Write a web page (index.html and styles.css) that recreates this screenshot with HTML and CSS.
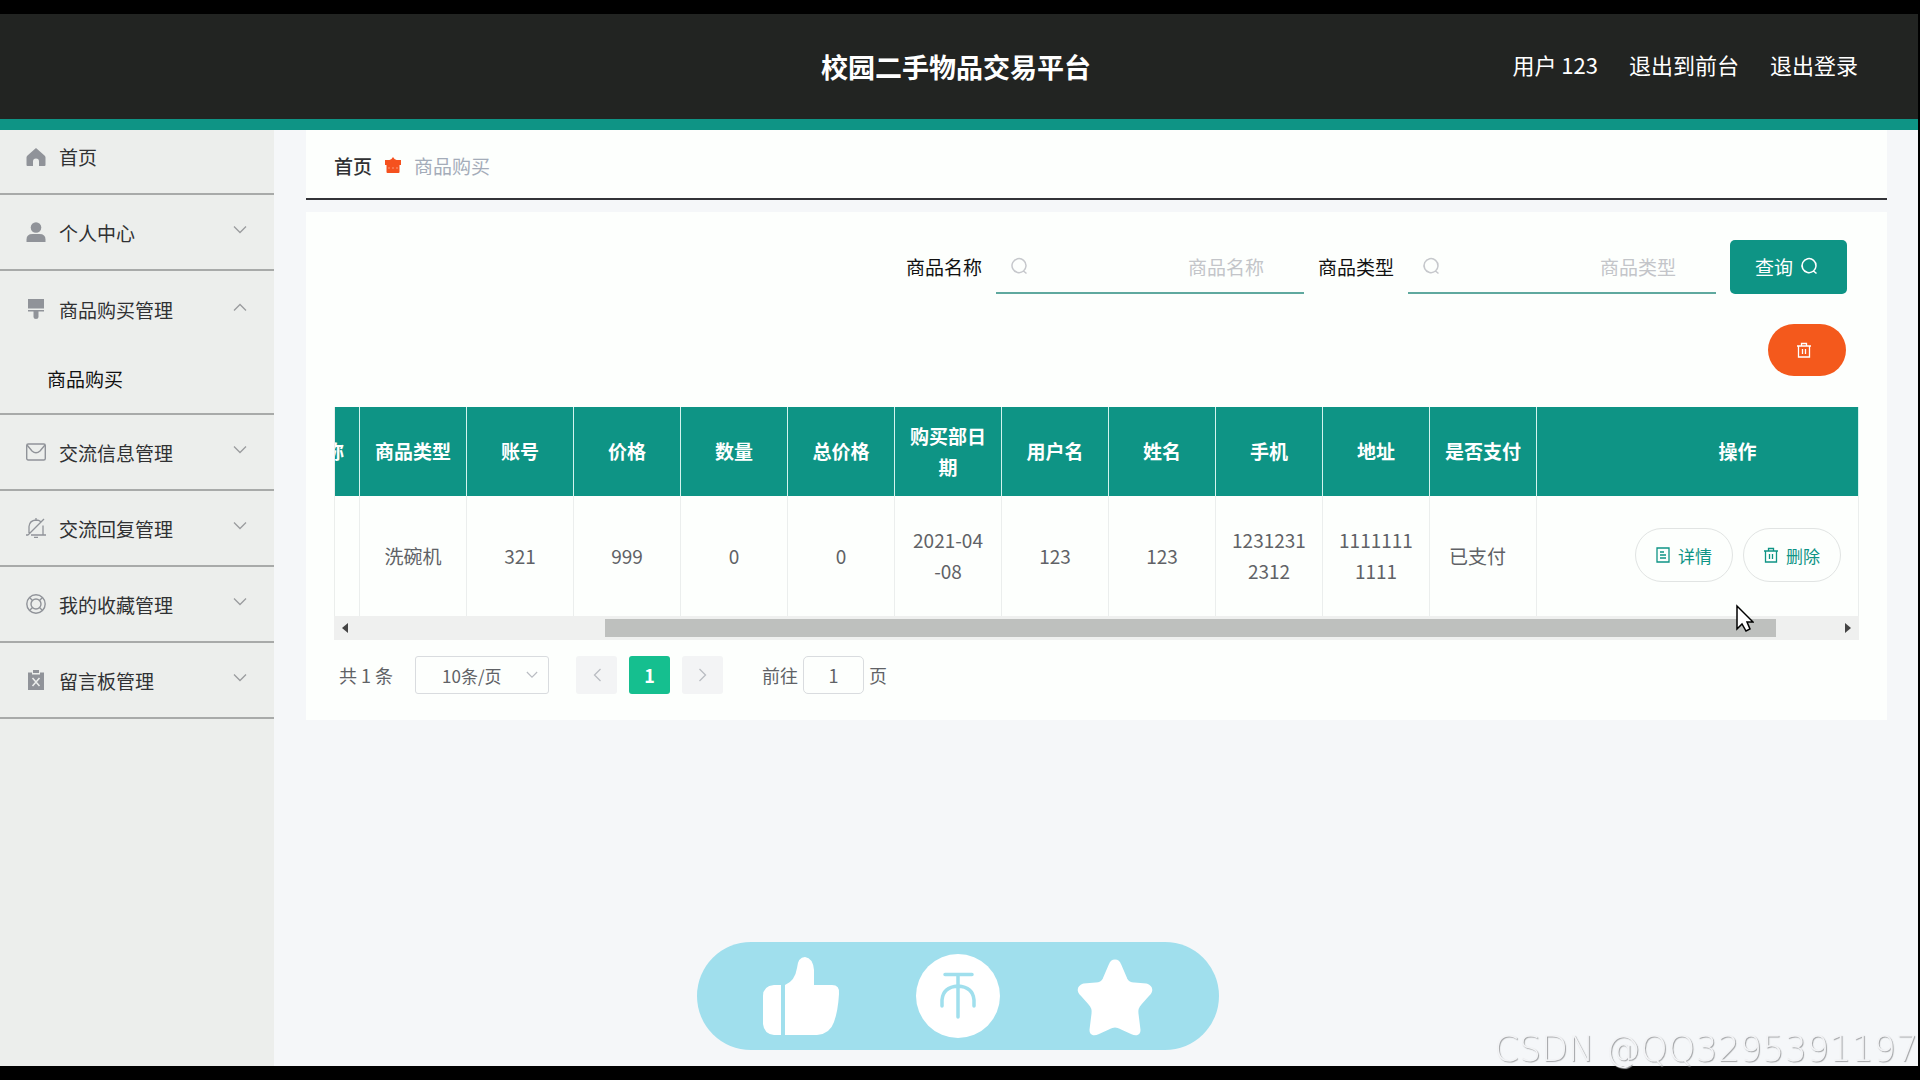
FILE: index.html
```html
<!DOCTYPE html>
<html lang="zh-CN">
<head>
<meta charset="utf-8">
<title>校园二手物品交易平台</title>
<link rel="stylesheet" href="styles.css">
</head>
<body>
<svg class="sprite" aria-hidden="true">
  <symbol id="down" viewBox="0 0 14 14"><path d="M1 3.500l6 6 6-6" fill="none" stroke="currentColor" stroke-width="1.300"/></symbol>
  <symbol id="search" viewBox="0 0 18 18"><path d="M13.500 14A7 7 0 1 1 16 9a7 7 0 0 1-2.500 5l3 2.500" fill="none" stroke="currentColor" stroke-width="1.500"/></symbol>
  <symbol id="trash" viewBox="0 0 16 16"><path d="M1 4h14M2.500 4v11h11V4M5.500 4V1.500h5V4M6.500 7v5M9.500 7v5" fill="none" stroke="currentColor" stroke-width="1.300"/></symbol>
</svg>

<header class="topbar">
  <h1 class="brand">校园二手物品交易平台</h1>
  <nav class="account">
    <span>用户 123</span>
    <a href="#">退出到前台</a>
    <a href="#">退出登录</a>
  </nav>
</header>

<div class="layout">
  <nav class="sidebar">
    <a class="menu-item first" href="#">
      <svg class="menu-icon" viewBox="0 0 20 20"><path fill="currentColor" d="M10 1l8.500 7.500q1 1 1 2V18q0 1-1 1H13v-4.500a3 3 0 0 0-6 0V19H1.500q-1 0-1-1v-7.500q0-1 1-2z"/></svg>
      <span>首页</span>
    </a>
    <a class="menu-item" href="#">
      <svg class="menu-icon" viewBox="0 0 20 20"><circle cx="10" cy="5.500" r="5.300" fill="currentColor"/><path fill="currentColor" d="M.5 20v-2.500q0-5.500 6-5.500h7q6 0 6 5.500V20z"/></svg>
      <span>个人中心</span>
      <svg class="arrow"><use href="#down"/></svg>
    </a>
    <div class="menu-group">
      <a class="menu-item open" href="#">
        <svg class="menu-icon" viewBox="0 0 20 20"><path fill="currentColor" d="M2 0h16v9.500H2zM2 11h16v1.500H12.500V18q0 2-2.500 2t-2.500-2v-5.500H2z"/></svg>
        <span>商品购买管理</span>
        <svg class="arrow up"><use href="#down"/></svg>
      </a>
      <a class="submenu-item" href="#">商品购买</a>
    </div>
    <a class="menu-item" href="#">
      <svg class="menu-icon" viewBox="0 0 20 20" fill="none" stroke="currentColor" stroke-width="1.400"><rect x=".7" y="2" width="18.600" height="16" rx="1.500"/><path d="M1 3l5 6q4 3.500 8 0l5-6"/></svg>
      <span>交流信息管理</span>
      <svg class="arrow"><use href="#down"/></svg>
    </a>
    <a class="menu-item" href="#">
      <svg class="menu-icon" viewBox="0 0 20 20" fill="none" stroke="currentColor" stroke-width="1.300"><path d="M3 15V8.500Q3.500 2.500 10 2q3 0 4.500 1.500M17 7.500V17M5 17h15M0 17h2M18 1L2 17M10 0v2M8 19.300h4"/></svg>
      <span>交流回复管理</span>
      <svg class="arrow"><use href="#down"/></svg>
    </a>
    <a class="menu-item" href="#">
      <svg class="menu-icon" viewBox="0 0 20 20" fill="none" stroke="currentColor" stroke-width="1.400"><circle cx="10" cy="10" r="9.200"/><circle cx="10" cy="10" r="5"/><path d="M3.500 3.500L6.500 6.500M16.500 3.500L13.500 6.500M3.500 16.500L6.500 13.500M16.500 16.500L13.500 13.500"/></svg>
      <span>我的收藏管理</span>
      <svg class="arrow"><use href="#down"/></svg>
    </a>
    <a class="menu-item" href="#">
      <svg class="menu-icon" viewBox="0 0 20 20"><path fill="currentColor" d="M2 2.500h4v2h8v-2h4V20H2zM7 0h6v3H7z"/><path d="M6.500 8l7 8M13.500 8l-7 8" stroke="#eceeec" stroke-width="1.500"/></svg>
      <span>留言板管理</span>
      <svg class="arrow"><use href="#down"/></svg>
    </a>
  </nav>

  <main class="content">
    <nav class="breadcrumb">
      <a href="#">首页</a>
      <svg class="crumb-icon" viewBox="0 0 16 16"><path fill="#f5511e" d="M6.500 2L8 0l1.500 2 2 1H16v5h-1.500v7q0 1-1 1h-11q-1 0-1-1V8H0V3h4.500z"/><path d="M3 11h2M7 11h2M11 11h2" stroke="#fa9a78"/></svg>
      <span class="current">商品购买</span>
    </nav>

    <section class="panel">
      <form class="search">
        <label for="name">商品名称</label>
        <div class="field">
          <svg class="glass"><use href="#search"/></svg>
          <input id="name" type="text" placeholder="商品名称">
        </div>
        <label for="type">商品类型</label>
        <div class="field">
          <svg class="glass"><use href="#search"/></svg>
          <input id="type" type="text" placeholder="商品类型">
        </div>
        <button class="query" type="button">查询<svg class="glass"><use href="#search"/></svg></button>
      </form>

      <div class="toolbar">
        <button class="remove-all" type="button" aria-label="删除"><svg class="bin"><use href="#trash"/></svg></button>
      </div>

      <div class="table-view">
        <table class="goods">
          <thead>
            <tr>
              <th>商品名称</th><th>商品类型</th><th>账号</th><th>价格</th><th>数量</th><th>总价格</th><th>购买部日期</th><th>用户名</th><th>姓名</th><th>手机</th><th>地址</th><th>是否支付</th><th class="ops">操作</th>
            </tr>
          </thead>
          <tbody>
            <tr>
              <td></td><td>洗碗机</td><td>321</td><td>999</td><td>0</td><td>0</td><td>2021-04-08</td><td>123</td><td>123</td><td>12312312312</td><td>11111111111</td><td class="paid">已支付</td>
              <td class="ops">
                <div class="actions">
                  <button type="button"><svg class="bin" viewBox="0 0 16 16"><path d="M2 1h12v14H2zM5 5h4M5 8h6M5 11h6" fill="none" stroke="currentColor" stroke-width="1.300"/></svg>详情</button>
                  <button type="button"><svg class="bin"><use href="#trash"/></svg>删除</button>
                </div>
              </td>
            </tr>
          </tbody>
        </table>
      </div>
      <div class="scrollbar">
        <svg class="scroll-arrow" viewBox="0 0 6 10"><path d="M6 0v10L0 5z" fill="#444"/></svg>
        <div class="track"><div class="thumb"></div></div>
        <svg class="scroll-arrow" viewBox="0 0 6 10"><path d="M0 0v10l6-5z" fill="#444"/></svg>
      </div>

      <div class="pagination">
        <span>共 1 条</span>
        <div class="size">
          <select aria-label="每页条数"><option>10条/页</option></select>
          <svg class="size-arrow"><use href="#down"/></svg>
        </div>
        <div class="pages">
          <button type="button" aria-label="上一页" disabled><svg class="step prev"><use href="#down"/></svg></button>
          <button type="button" class="active">1</button>
          <button type="button" aria-label="下一页" disabled><svg class="step next"><use href="#down"/></svg></button>
        </div>
        <div class="jump">
          <label for="page">前往</label>
          <input id="page" type="text" value="1">
          <span>页</span>
        </div>
      </div>
    </section>
  </main>
</div>

<div class="reactions">
  <svg class="reaction" viewBox="0 0 84 84"><path fill="#fff" d="M15 31h7v50h-7q-10-1-11-11V42q0-10 11-11zM26 31q10-4 12-17 1-11 8-11 8 1 9 13v15h18q8 0 7 9-1 17-5 28-4 12-17 13H26z"/></svg>
  <svg class="reaction" viewBox="0 0 84 84"><circle cx="42" cy="42" r="42" fill="#fff"/><path d="M29 20.500h27M42 21v42M26 52v-6q1-13 16-14 15 1 16 14v6" fill="none" stroke="#a0dfed" stroke-width="3.500" stroke-linecap="round"/></svg>
  <svg class="reaction" viewBox="0 0 84 84"><path d="M42 9q2 0 3 3l6 14q3 6 10 6l12 1q5 2 1 6l-8 9q-5 5-4 12l2 16q0 3-4 1l-11-5q-7-4-14 0l-11 5q-4 2-4-1l2-16q1-7-4-12l-8-9q-4-4 1-6l12-1q7 0 10-6l6-14q1-3 3-3z" fill="#fff" stroke="#fff" stroke-width="7" stroke-linejoin="round"/></svg>
</div>

<div class="watermark">CSDN @QQ3295391197</div>

<svg class="cursor" viewBox="0 0 18 28"><path d="M1 2v23l5-5 4 7 4-2-3-7h6z" fill="#fff" stroke="#000" stroke-width="1.500"/></svg>
</body>
</html>
```
FILE: styles.css
```css
* {
  box-sizing: border-box;
}

body {
  margin: 0;
  min-height: 100vh;
  padding: 14px 2px 14px 0;
  display: flex;
  flex-direction: column;
  background: #000;
  color: #606266;
  font-family: "Noto Sans CJK SC", "Noto Sans", sans-serif;
  font-size: 19px;
  line-height: 31px;
}

a {
  color: inherit;
  text-decoration: none;
}

button,
input,
select {
  margin: 0;
  padding: 0;
  border: 0;
  background: none;
  color: inherit;
  font: inherit;
}

button {
  display: inline-flex;
  align-items: center;
  justify-content: center;
}

.sprite {
  display: none;
}

/* Header */
.topbar {
  display: grid;
  grid-template-columns: 1fr auto 1fr;
  align-items: center;
  height: 116px;
  padding: 0 60px 0 54px;
  background: #222422;
  border-bottom: 11px solid #0e9485;
  color: #fff;
}

.brand {
  grid-column: 2;
  margin: 0;
  font-size: 27px;
}

.account {
  display: flex;
  justify-content: flex-end;
  gap: 31px;
  padding-bottom: 4px;
  font-size: 22px;
}

/* Sidebar */
.layout {
  flex: 1;
  display: flex;
  background: #f5f7f9;
}

.sidebar {
  width: 274px;
  flex: none;
  background: #eceeec;
  color: #303133;
}

.menu-item {
  display: flex;
  align-items: center;
  gap: 13px;
  height: 76px;
  padding: 0 27px 0 26px;
  border-bottom: 2px solid #a8aaa9;
}

.menu-item.first {
  height: 65px;
  padding-bottom: 10px;
}

.menu-item.open {
  border-bottom: 0;
}

.menu-group {
  height: 144px;
  border-bottom: 2px solid #a8aaa9;
}

.submenu-item {
  display: block;
  padding: 16px 47px;
  color: #111;
}

.menu-icon {
  width: 20px;
  height: 20px;
  color: #909399;
}

.arrow {
  width: 14px;
  height: 14px;
  margin: 0 0 4px auto;
  color: #9a9c9e;
}

.up {
  transform: rotate(180deg);
}

/* Content */
.content {
  flex: 1;
  min-width: 0;
  padding: 0 31px 0 32px;
}

.breadcrumb {
  display: flex;
  align-items: center;
  gap: 13px;
  height: 70px;
  padding: 2px 28px 0;
  background: #fdfffd;
  border-bottom: 2px solid #333438;
  color: #303133;
  font-weight: 500;
}

.crumb-icon {
  width: 16px;
  height: 16px;
}

.current {
  color: #a4acb9;
  font-weight: 400;
}

.panel {
  margin-top: 12px;
  padding: 28px 28px 26px;
  background: #fdfffd;
}

.search {
  display: flex;
  align-items: center;
  justify-content: flex-end;
  gap: 14px;
  padding-right: 12px;
  color: #111;
}

.search label {
  padding-bottom: 2px;
}

.field {
  display: flex;
  align-items: center;
  width: 308px;
  height: 54px;
  padding: 0 40px 0 14px;
  border-bottom: 2px solid #5fa99f;
  color: #c6c8cc;
}

.field input {
  flex: 1;
  min-width: 0;
  text-align: right;
}

.field input::placeholder {
  color: #c3c5c9;
}

.glass {
  width: 18px;
  height: 18px;
}

.query {
  gap: 7px;
  width: 117px;
  height: 54px;
  padding-right: 4px;
  padding-bottom: 2px;
  border-radius: 5px;
  background: #0e9485;
  color: #fff;
}

.toolbar {
  display: flex;
  justify-content: flex-end;
  padding: 30px 13px 31px 0;
}

.remove-all {
  width: 78px;
  height: 52px;
  padding-right: 6px;
  border-radius: 26px;
  background: #f4591c;
  color: #fff;
}

.bin {
  width: 16px;
  height: 16px;
}

/* Table, scrolled to its right end */
.table-view {
  display: flex;
  justify-content: flex-end;
  overflow: hidden;
  border-left: 1px solid #ebeeec;
}

.goods {
  flex: none;
  table-layout: fixed;
  width: 1606px;
  border-spacing: 0;
}

.goods th,
.goods td {
  width: 107px;
  padding: 0 15px 2px;
  border-right: 1px solid #ebeeed;
  text-align: center;
  word-break: break-all;
}

.goods th {
  height: 89px;
  background: #0e9485;
  border-right-color: #d3f3ee;
  color: #fff;
}

.goods td {
  height: 120px;
}

.goods .ops {
  width: 322px;
  padding: 0 0 2px 80px;
}

.goods .paid {
  padding-left: 19px;
  text-align: left;
}

.actions {
  display: flex;
  justify-content: center;
  gap: 10px;
}

.actions button {
  gap: 7px;
  width: 98px;
  height: 54px;
  border: 1px solid #e1e4e3;
  border-radius: 27px;
  color: #0e9485;
  font-size: 17px;
}

.scrollbar {
  display: flex;
  align-items: center;
  justify-content: space-between;
  height: 24px;
  padding: 0 8px;
  background: #eff0ef;
}

.scroll-arrow {
  width: 6px;
  height: 10px;
}

.track {
  flex: 1;
  margin: 0 10px;
}

.thumb {
  width: 79.25%;
  height: 18px;
  margin-left: 16.75%;
  background: #bec0be;
}

/* Pagination */
.pagination {
  display: flex;
  align-items: center;
  padding: 16px 5px 0;
  font-size: 18px;
}

.size {
  display: flex;
  align-items: center;
  width: 134px;
  height: 38px;
  margin: 0 27px 0 22px;
  padding-right: 10px;
  border: 1px solid #d9dcdf;
  border-radius: 3px;
}

.size select {
  flex: 1;
  min-width: 0;
  padding-left: 26px;
  appearance: none;
  font-size: 17px;
}

.size-arrow {
  width: 12px;
  height: 12px;
  color: #b9bcc2;
}

.pages {
  display: flex;
  gap: 12px;
}

.pages button {
  width: 41px;
  height: 38px;
  border-radius: 3px;
  background: #f3f4f5;
  color: #b9bcc2;
}

.pages .active {
  background: #15bf8f;
  color: #fff;
  font-weight: 700;
}

.step {
  width: 14px;
  height: 14px;
}

.prev {
  transform: rotate(90deg);
}

.next {
  transform: rotate(-90deg);
}

.jump {
  display: flex;
  align-items: center;
  gap: 5px;
  margin-left: 39px;
}

.jump input {
  width: 61px;
  height: 38px;
  border: 1px solid #d9dcdf;
  border-radius: 5px;
  text-align: center;
}

/* Overlays */
.reactions {
  position: fixed;
  bottom: 30px;
  left: 50%;
  display: flex;
  align-items: center;
  justify-content: center;
  gap: 73px;
  width: 522px;
  height: 108px;
  margin-left: -263px;
  border-radius: 54px;
  background: #a0dfed;
}

.reaction {
  width: 84px;
  height: 84px;
}

.watermark {
  position: fixed;
  right: 2px;
  bottom: 11px;
  color: #f3f4f6;
  font-family: "DejaVu Sans", sans-serif;
  font-size: 35px;
  font-weight: 200;
  line-height: 40px;
  text-shadow: 1px 1px 1px #a0a2a4;
}

.cursor {
  position: absolute;
  left: 1736px;
  top: 604px;
  width: 18px;
  height: 28px;
}
```
